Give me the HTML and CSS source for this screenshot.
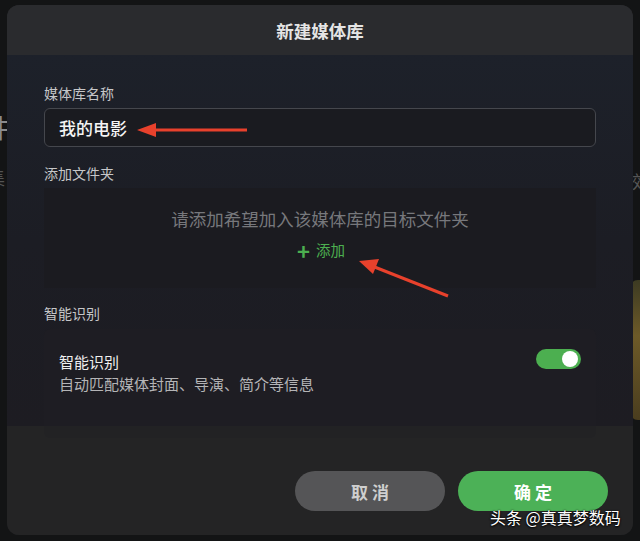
FILE: index.html
```html
<!DOCTYPE html>
<html lang="zh">
<head>
<meta charset="utf-8">
<link rel="stylesheet" href="styles.css">
</head>
<body>
<div class="backdrop">
  <span class="bg-glyph g1">件</span>
  <span class="bg-glyph g2">集</span>
  <span class="bg-glyph g3">效</span>
  <div class="bg-poster"></div>
</div>
<div class="modal">
  <div class="modal-header">新建媒体库</div>
  <div class="modal-body">
    <div class="field-label">媒体库名称</div>
    <div class="text-input">我的电影</div>
    <div class="field-label sec">添加文件夹</div>
    <div class="folder-box">
      <div class="folder-hint">请添加希望加入该媒体库的目标文件夹</div>
      <div class="add-link"><span class="plus">+</span>添加</div>
    </div>
    <div class="field-label sec last">智能识别</div>
    <div class="card">
      <div class="card-text">
        <div class="card-title">智能识别</div>
        <div class="card-sub">自动匹配媒体封面、导演、简介等信息</div>
      </div>
      <div class="toggle"><span class="knob"></span></div>
    </div>
  </div>
  <div class="modal-footer">
    <button class="btn btn-cancel">取 消</button>
    <button class="btn btn-ok">确 定</button>
  </div>
</div>
<svg class="annotations" width="640" height="541" viewBox="0 0 640 541">
  <line x1="247" y1="130" x2="152" y2="130" stroke="#e8412c" stroke-width="3"/>
  <polygon points="137,130 156,123 156,137" fill="#e8412c"/>
  <line x1="448" y1="296" x2="372" y2="266" stroke="#e8412c" stroke-width="3"/>
  <polygon points="359,261 379,259 373,274" fill="#e8412c"/>
</svg>
<div class="watermark">头条 @真真梦数码</div>
</body>
</html>
```
FILE: styles.css
```css
* { box-sizing: border-box; }
html, body { margin: 0; padding: 0; }
body {
  width: 640px;
  height: 541px;
  overflow: hidden;
  background: #131415;
  font-family: "Noto Sans CJK SC", "Noto Sans", sans-serif;
  position: relative;
  padding: 5px 7px 0 7px;
}
.backdrop { position: absolute; inset: 0; }
.bg-glyph { position: absolute; color: #8a8b8d; font-size: 26px; }
.g1 { left: -16px; top: 108px; }
.g2 { left: -13px; top: 164px; font-size: 18px; color: #555; }
.g3 { left: 632px; top: 168px; font-size: 18px; color: #555; }
.bg-poster {
  position: absolute; left: 630px; top: 280px; width: 20px; height: 140px;
  background: linear-gradient(180deg, #3c3a22 0%, #6d5a28 40%, #4a3d1e 100%);
  border-radius: 8px;
}
.modal {
  position: relative;
  width: 626px;
  height: 530px;
  border-radius: 12px;
  overflow: hidden;
  display: flex;
  flex-direction: column;
  background: #242426;
}
.modal-header {
  height: 50px;
  flex: none;
  background: #2a2b2e;
  color: #e4e4e4;
  font-size: 17.5px;
  font-weight: 700;
  display: flex;
  align-items: center;
  justify-content: center;
}
.modal-body {
  flex: none;
  height: 371px;
  padding: 29px 37px 0 37px;
  background: linear-gradient(180deg, #1d212a 0%, #1c1d24 50%, #1d1c22 100%);
  display: flex;
  flex-direction: column;
}
.modal-body > * { flex-shrink: 0; }
.field-label {
  font-size: 14px;
  line-height: 18px;
  color: #c6c7c9;
  margin-bottom: 6px;
}
.field-label.sec { margin-top: 17px; }
.field-label.last { margin-top: 16px; margin-bottom: 7px; }
.text-input {
  height: 39px;
  border: 1px solid #45474d;
  border-radius: 6px;
  background: #1a1b20;
  color: #f4f4f4;
  font-size: 17px;
  font-weight: 500;
  padding-left: 14px;
  display: flex;
  align-items: center;
}
.folder-box {
  height: 100px;
  background: #1b1b20;
  display: flex;
  flex-direction: column;
  align-items: center;
  padding-top: 18px;
}
.folder-hint {
  color: #77787c;
  font-size: 17.5px;
  line-height: 26px;
}
.add-link {
  margin-top: 8px;
  color: #4caf50;
  font-size: 14.5px;
  line-height: 20px;
  display: flex;
  align-items: center;
  margin-left: 2px;
}
.plus {
  font-size: 22px;
  font-weight: 700;
  margin-right: 6px;
  line-height: 20px;
}
.card {
  height: 109px;
  background: #1e1d23;
  border-radius: 6px;
  padding: 20px 15px 0 15px;
  display: flex;
  justify-content: space-between;
  align-items: flex-start;
}
.card-text { padding-top: 2px; }
.card-title { color: #f0f0f0; font-size: 15px; line-height: 22px; }
.card-sub { color: #b4b4b6; font-size: 15px; line-height: 22px; }
.toggle {
  width: 45px;
  height: 20px;
  border-radius: 10px;
  background: #4caf50;
  position: relative;
}
.knob {
  position: absolute;
  right: 3px;
  top: 2px;
  width: 16px;
  height: 16px;
  border-radius: 50%;
  background: #fff;
}
.modal-footer {
  flex: 1;
  position: relative;
  background: rgba(36, 36, 38, 0.75);
  display: flex;
  justify-content: flex-end;
  align-items: flex-start;
  padding: 45px 25px 0 0;
  gap: 13px;
}
.btn {
  width: 150px;
  height: 40px;
  border: none;
  border-radius: 20px;
  font-family: "Noto Sans CJK SC", sans-serif;
  font-size: 17px;
  font-weight: 700;
}
.btn-cancel { background: #555557; color: #cfcfcf; }
.btn-ok { background: #4cb157; color: #ffffff; }
.annotations { position: absolute; left: 0; top: 0; pointer-events: none; }
.watermark {
  position: absolute;
  left: 490px;
  top: 505px;
  color: #ffffff;
  font-size: 16px;
  text-shadow: 0 0 2px #000, 0 1px 2px #000;
  font-family: "Noto Sans CJK SC", sans-serif;
}
```
